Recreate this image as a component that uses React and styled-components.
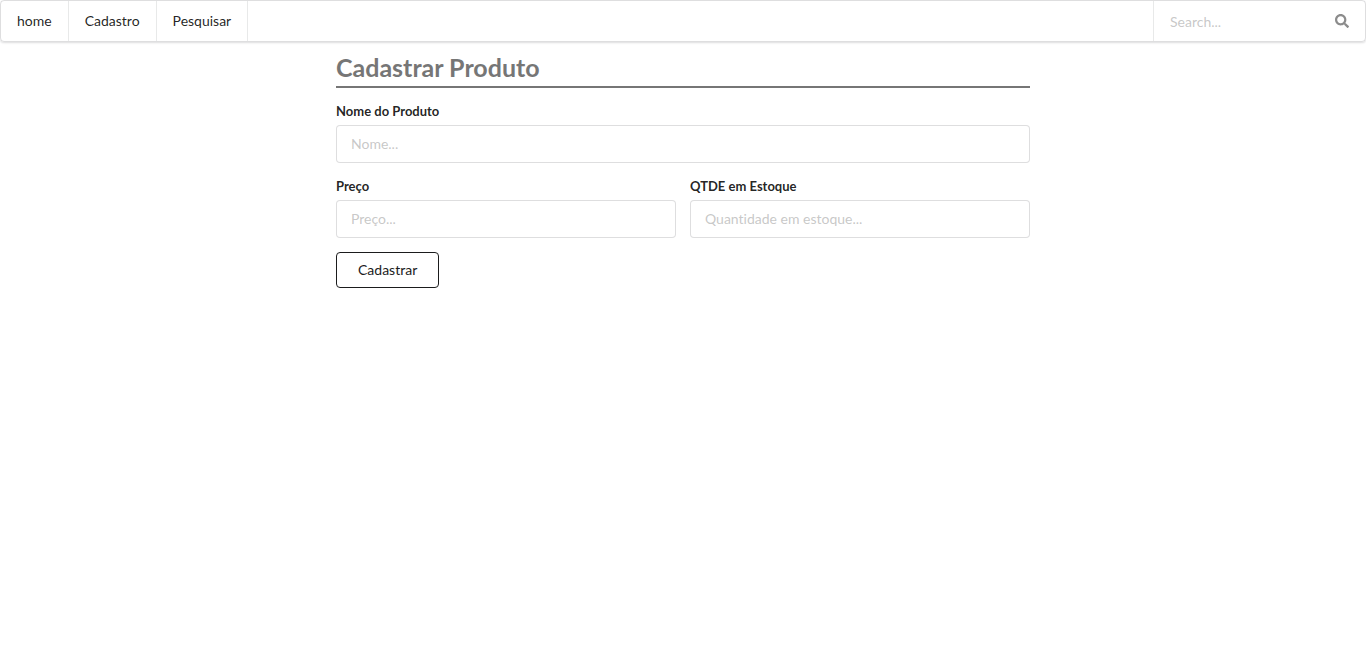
import React from 'react';
import styled, { createGlobalStyle } from 'styled-components';
import { FaSearch } from 'react-icons/fa';

const GlobalStyle = createGlobalStyle`
  *, *::before, *::after { box-sizing: border-box; }
  body {
    margin: 0;
    background: #fff;
    color: rgba(0, 0, 0, 0.87);
    font-family: Lato, "Liberation Sans", sans-serif;
    font-size: 14px;
    font-variant-ligatures: none;
    line-height: 20px;
  }
`;

const Menu = styled.nav`
  display: flex;
  height: 42px;
  border: 1px solid rgba(34, 36, 38, 0.15);
  border-radius: 4px;
  box-shadow: 0 1px 2px 0 rgba(34, 36, 38, 0.15);
`;

const MenuLink = styled.a`
  display: flex;
  align-items: center;
  padding: 0 16px;
  border-right: 1px solid rgba(34, 36, 38, 0.1);
  color: rgba(0, 0, 0, 0.87);
  line-height: 14px;
  text-decoration: none;
`;

const Search = styled.label`
  display: flex;
  align-items: center;
  width: 212px;
  margin-left: auto;
  padding: 0 16px;
  border-left: 1px solid rgba(34, 36, 38, 0.1);
  color: #8c8c8c;
`;

const SearchInput = styled.input`
  flex: 1;
  min-width: 0;
  padding: 2px 0 0;
  border: 0;
  outline: 0;
  background: transparent;
  color: rgba(0, 0, 0, 0.87);
  font: inherit;
  font-variant-ligatures: none;
  &::placeholder { color: rgba(191, 191, 191, 0.87); }
`;

const Content = styled.main`
  width: 100%;
  max-width: 694px;
  margin: 12px auto 0;
`;

const Title = styled.h1`
  margin: 0 0 14px;
  padding-bottom: 6px;
  border-bottom: 2px solid #767676;
  color: #767676;
  font-size: 25px;
  font-weight: 700;
  line-height: 26px;
`;

const Form = styled.form`
  display: flex;
  flex-direction: column;
  align-items: stretch;
  gap: 14px;
`;

const Row = styled.div`
  display: grid;
  grid-template-columns: 1fr 1fr;
  gap: 14px;
`;

const FieldBox = styled.div`
  display: flex;
  flex-direction: column;
  gap: 4px;
`;

const Label = styled.label`
  font-size: 13px;
  font-weight: 700;
  line-height: 19px;
`;

const Input = styled.input`
  width: 100%;
  height: 38px;
  padding: 0 14px 2px;
  border: 1px solid rgba(34, 36, 38, 0.15);
  border-radius: 4px;
  background: #fff;
  color: rgba(0, 0, 0, 0.87);
  font: inherit;
  font-variant-ligatures: none;
  &::placeholder { color: rgba(191, 191, 191, 0.87); }
`;

const Button = styled.button`
  align-self: flex-start;
  height: 36px;
  padding: 0 21px;
  border: 1px solid #1b1c1d;
  border-radius: 4px;
  background: #fff;
  color: #1b1c1d;
  font: inherit;
  cursor: pointer;
`;

function Field({ id, label, placeholder }) {
  return (
    <FieldBox>
      <Label htmlFor={id}>{label}</Label>
      <Input id={id} type="text" placeholder={placeholder} />
    </FieldBox>
  );
}

export default function App() {
  return (
    <>
      <GlobalStyle />
      <Menu>
        <MenuLink href="#home">home</MenuLink>
        <MenuLink href="#cadastro">Cadastro</MenuLink>
        <MenuLink href="#pesquisar">Pesquisar</MenuLink>
        <Search>
          <SearchInput type="text" placeholder="Search..." aria-label="Search" />
          <FaSearch size={14} aria-hidden="true" />
        </Search>
      </Menu>
      <Content>
        <Title>Cadastrar Produto</Title>
        <Form onSubmit={(e) => e.preventDefault()}>
          <Field id="nome" label="Nome do Produto" placeholder="Nome..." />
          <Row>
            <Field id="preco" label="Preço" placeholder="Preço..." />
            <Field id="estoque" label="QTDE em Estoque" placeholder="Quantidade em estoque..." />
          </Row>
          <Button type="submit">Cadastrar</Button>
        </Form>
      </Content>
    </>
  );
}
